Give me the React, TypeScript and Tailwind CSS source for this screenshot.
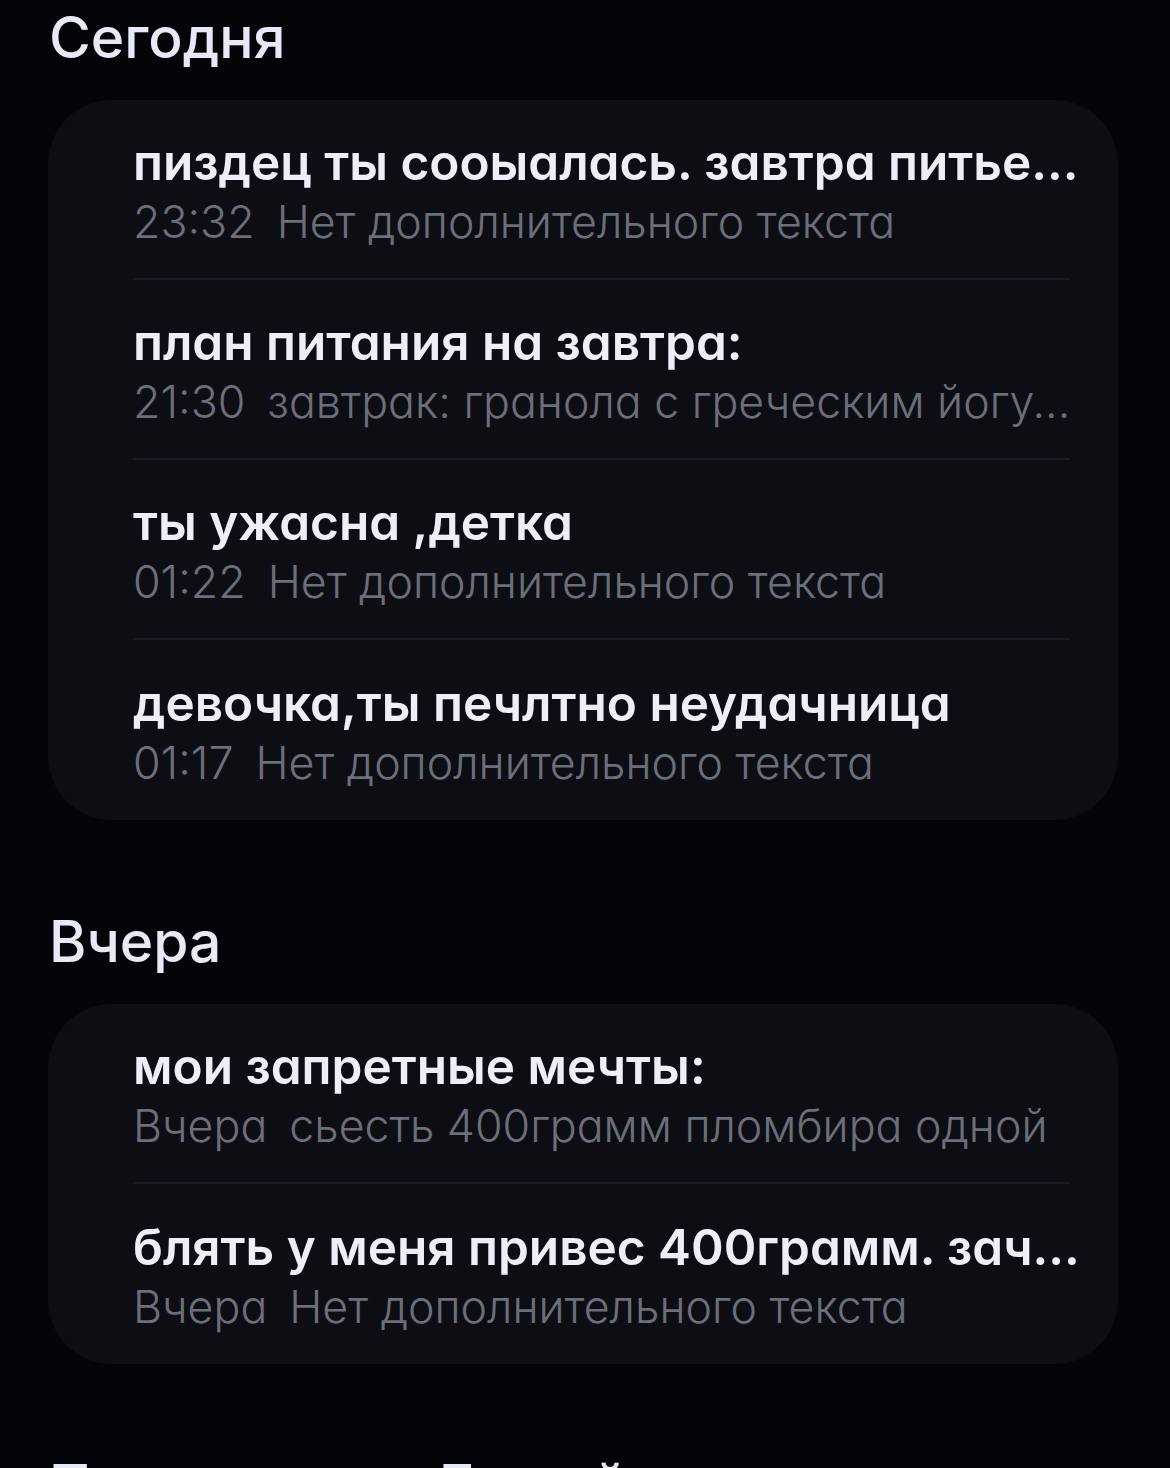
import React from "react"

interface Note {
    title: string
    time: string
    preview: string
}

const today: Note[] = [
    { title: "пиздец ты сооыалась. завтра питье...", time: "23:32", preview: "Нет дополнительного текста" },
    { title: "план питания на завтра:", time: "21:30", preview: "завтрак: гранола с греческим йогу..." },
    { title: "ты ужасна ,детка", time: "01:22", preview: "Нет дополнительного текста" },
    { title: "девочка,ты печлтно неудачница", time: "01:17", preview: "Нет дополнительного текста" },
]

const yesterday: Note[] = [
    { title: "мои запретные мечты:", time: "Вчера", preview: "сьесть 400грамм пломбира одной" },
    { title: "блять у меня привес 400грамм. зач...", time: "Вчера", preview: "Нет дополнительного текста" },
]

function NoteRow({ note, last }: { note: Note; last: boolean }) {
    return (
        <div className={"h-[180px] flex flex-col justify-center pt-[4px] " + (last ? "" : "border-b-2 border-[#1a1b22]")}>
            <div className="text-[49.5px] leading-[62px] font-semibold text-[#eceef8] [font-feature-settings:'cv11'] whitespace-nowrap mr-[-24px]">
                {note.title}
            </div>
            <div className="text-[44.7px] leading-[58px] font-light text-[#6b6e7b] [font-feature-settings:'cv11'] whitespace-nowrap mr-[-24px]">
                <span className="mr-[22px]">{note.time}</span>
                {note.preview}
            </div>
        </div>
    )
}

function Section({ label, notes }: { label: string; notes: Note[] }) {
    return (
        <section className="flex flex-col">
            <h2 className="text-[57px] leading-[76px] font-medium text-[#e7e9f6] pl-[1px]">{label}</h2>
            {notes.length > 0 && (
                <div className="mt-[24px] bg-[#0d0e13] rounded-[64px] pl-[85px] pr-[48px]">
                    {notes.map((n, i) => (
                        <NoteRow key={i} note={n} last={i === notes.length - 1} />
                    ))}
                </div>
            )}
        </section>
    )
}

export default function App() {
    return (
        <div className="h-[1468px] overflow-hidden bg-[#050509] pl-[48px] pr-[52px] font-['Inter',sans-serif] flex flex-col gap-[84px]">
            <Section label="Сегодня" notes={today} />
            <Section label="Вчера" notes={yesterday} />
            <Section label="Предыдущие 7 дней" notes={[]} />
        </div>
    )
}
